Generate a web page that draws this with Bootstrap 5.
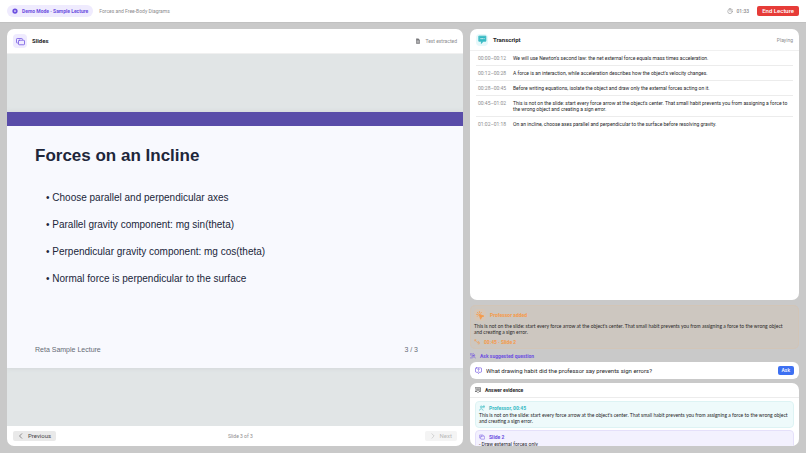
<!DOCTYPE html>
<html lang="en">
<head>
<meta charset="utf-8">
<meta name="viewport" content="width=device-width, initial-scale=1">
<title>Forces and Free-Body Diagrams</title>
<link href="https://cdn.jsdelivr.net/npm/bootstrap@5.3.0/dist/css/bootstrap.min.css" rel="stylesheet">
<style>
  body { font: 5px/6px Roboto, "Liberation Sans", sans-serif; background: #c9c9c9; color: #262628; }
  svg { flex: none; fill: none; stroke: currentColor; stroke-width: 1.5; stroke-linecap: round; stroke-linejoin: round; }
  .i6 { width: 6px; height: 6px; }
  .i7 { width: 7px; height: 7px; }
  .gap-s { gap: 4px; }
  .gap-h { gap: 5px; }
  .gap-m { gap: 6px; }
  .purple { color: #6c4fe0; }
  .muted { color: #8c8c8e; }
  .topbar { height: 22px; padding: 0 7px; box-shadow: 0 0 1px #999; }
  .mode-pill { background: #efebfe; padding: 3px 5px; border-radius: 6px; }
  .btn { font-size: 5px; line-height: 6px; border: 0; border-radius: 2px; }
  .btn-end { font-size: 6px; line-height: 8px; padding: 1px 5px; background: #e63c38; color: #fff; }
  .btn-end:hover { background: #c92f2c; color: #fff; }
  .workspace { display: grid; grid-template-columns: 456fr 329fr; gap: 7px; padding: 7px; min-height: 0; }
  .panel { background: #fff; border-radius: 7px; overflow: hidden; min-height: 0; }
  .panel-head { padding: 0 6px; border-bottom: 1px solid #f0f0f0; }
  .head-l { height: 25px; }
  .head-r { height: 22px; }
  .panel-head h2 { font-size: 6px; line-height: 8px; font-weight: 700; }
  .tile { width: 14px; height: 14px; border-radius: 4px; background: #efebfe; }
  .tile svg { width: 9px; height: 9px; }
  .tile-teal { width: 12px; height: 12px; background: #e6f8fa; color: #35b9c3; }
  .tile-orange { width: 12px; height: 12px; background: #d6c6b6; }
  .stage { background: #e1e5e6; min-height: 0; }
  .slide { background: #f8f9fe; border-top: 14px solid #594ca9; aspect-ratio: 456 / 256; padding: 0 45px 13px 28px; font-family: "Liberation Sans", Arial, sans-serif; color: #20263a; box-shadow: 0 0 5px #cdd2d4; }
  .slide h1 { font-size: 17px; line-height: 20px; font-weight: 700; margin: 20px 0 25px; }
  .slide ul { list-style: none; margin: 0; padding: 0 0 0 11px; font-size: 10px; line-height: 13px; display: grid; gap: 14px; }
  .slide li::before { content: "• "; }
  .slide-foot { font-size: 7px; line-height: 11px; color: #666b75; }
  .pager { height: 20px; padding: 0 6px; }
  .btn-page { font-size: 6px; line-height: 7px; padding: 1px 5px 2px; background: #e9e9e9; color: #454547; }
  .btn-page:disabled { background: #f4f4f4; color: #bababa; border: 0; opacity: 1; }
  .lines { padding: 0 6px; }
  .lines li { display: grid; grid-template-columns: 31px 1fr; gap: 4px; padding: 4px 5px 4px 2px; border-bottom: 1px solid #ececec; }
  .lines li:last-child { border: 0; }
  .side { min-height: 0; }
  .transcript { flex: 1 1 0; }
  .aside-note { background: #cdc7c0; border: 1px solid #d2c5b7; border-radius: 5px; padding: 3px; margin: 5px 0 4px; color: #2b2a29; }
  .orange { color: #f59a4a; }
  .note-text { font-family: Lato, "Liberation Sans", sans-serif; }
  .aside-note .note-text { margin: 2px 0 4px; }
  .ask { background: #fff; border-radius: 6px; height: 17px; padding: 0 5px; margin: 3px 0 4px; }
  .ask input { font: 6px/8px Roboto, "Liberation Sans", sans-serif; color: #262628; border: 0; padding: 0; outline: 0; min-width: 0; background: none; }
  .btn-ask { background: #3d70f2; color: #fff; padding: 1px 4px 2px; }
  .btn-ask:hover { background: #2f5fd8; color: #fff; }
  .answer { flex: 0 0 63px; }
  .answer-head { height: 15px; padding: 0 5px; border-bottom: 1px solid #ececec; }
  .answer-head h2 { font-size: 5px; line-height: 6px; font-weight: 700; }
  .evidence { margin: 3px 5px 0; padding: 3px; border: 1px solid #ddf3f4; border-radius: 4px; background: #eefafb; }
  .evidence p { margin: 1px 0 0; }
  .evidence-slide { background: #f3f1fe; border-color: #e5e0fa; margin-top: 2px; }
  .teal { color: #35b9c3; }
</style>
<script src="https://cdn.jsdelivr.net/npm/bootstrap@5.3.0/dist/js/bootstrap.bundle.min.js"></script>
</head>
<body class="vh-100 d-flex flex-column overflow-hidden">
<header class="topbar bg-white d-flex align-items-center justify-content-between">
  <div class="d-flex align-items-center gap-m">
    <span class="mode-pill purple fw-bold d-flex align-items-center gap-s">
      <svg class="i6" viewBox="0 0 16 16"><circle cx="8" cy="8" r="7" fill="currentColor" stroke="none"/><path d="M6.500 5v6l5-3z" fill="#fff" stroke="none"/></svg>
      Demo Mode · Sample Lecture
    </span>
    <span class="muted">Forces and Free-Body Diagrams</span>
  </div>
  <div class="d-flex align-items-center gap-s">
    <svg class="i6 muted" viewBox="0 0 16 16"><circle cx="8" cy="9" r="6"/><path d="M8 9V5M6 1h4M13 3l1 1"/></svg>
    <span class="muted fw-medium me-1">01:33</span>
    <button type="button" class="btn btn-end fw-medium">End Lecture</button>
  </div>
</header>

<main class="workspace flex-grow-1">
  <section class="panel d-flex flex-column" aria-labelledby="slides-title">
    <div class="panel-head head-l d-flex align-items-center justify-content-between">
      <div class="d-flex align-items-center gap-h">
        <span class="tile purple d-flex align-items-center justify-content-center"><svg viewBox="0 0 18 16"><path d="M3 11H2.500A1.500 1.500 0 0 1 1 9.500v-6A1.500 1.500 0 0 1 2.500 2h9A1.500 1.500 0 0 1 13 3.500"/><rect x="5" y="5.500" width="12" height="9" rx="1.500"/></svg></span>
        <h2 class="m-0" id="slides-title">Slides</h2>
      </div>
      <div class="d-flex align-items-center gap-1 muted">
        <svg class="i6" viewBox="0 0 16 16"><path d="M3 1h6l4 4v10H3z" fill="#77777a" stroke="none"/><path d="M5.500 8h5M5.500 11h5" stroke="#fff"/></svg>
        Text extracted
      </div>
    </div>
    <div class="stage flex-grow-1 d-flex flex-column justify-content-center">
      <article class="slide d-flex flex-column">
        <h1>Forces on an Incline</h1>
        <ul>
          <li>Choose parallel and perpendicular axes</li>
          <li>Parallel gravity component: mg sin(theta)</li>
          <li>Perpendicular gravity component: mg cos(theta)</li>
          <li>Normal force is perpendicular to the surface</li>
        </ul>
        <div class="slide-foot mt-auto d-flex justify-content-between"><span>Reta Sample Lecture</span><span>3 / 3</span></div>
      </article>
    </div>
    <div class="pager d-flex align-items-center justify-content-between">
      <button type="button" class="btn btn-page d-flex align-items-center gap-1"><svg class="i6" viewBox="0 0 16 16"><path d="M10 2L4 8l6 6"/></svg>Previous</button>
      <span class="muted">Slide 3 of 3</span>
      <button type="button" class="btn btn-page d-flex align-items-center gap-1" disabled><svg class="i6" viewBox="0 0 16 16"><path d="M5 2l6 6-6 6"/></svg>Next</button>
    </div>
  </section>

  <div class="side d-flex flex-column">
    <section class="panel transcript" aria-labelledby="transcript-title">
      <div class="panel-head head-r d-flex align-items-center justify-content-between">
        <div class="d-flex align-items-center gap-h">
          <span class="tile tile-teal d-flex align-items-center justify-content-center"><svg viewBox="0 0 16 16"><path d="M2 2h12v9H9l-3 4v-4H2z" fill="currentColor"/><path d="M5 6.500h1M8 6.500h.1M10.500 6.500h.5" stroke="#fff"/></svg></span>
          <h2 class="m-0" id="transcript-title">Transcript</h2>
        </div>
        <span class="muted">Playing</span>
      </div>
      <ol class="lines list-unstyled m-0">
        <li><span class="muted">00:00–00:12</span><span>We will use Newton's second law: the net external force equals mass times acceleration.</span></li>
        <li><span class="muted">00:12–00:28</span><span>A force is an interaction, while acceleration describes how the object's velocity changes.</span></li>
        <li><span class="muted">00:28–00:45</span><span>Before writing equations, isolate the object and draw only the external forces acting on it.</span></li>
        <li><span class="muted">00:45–01:02</span><span>This is not on the slide: start every force arrow at the object's center. That small habit prevents you from assigning a force to the wrong object and creating a sign error.</span></li>
        <li><span class="muted">01:02–01:18</span><span>On an incline, choose axes parallel and perpendicular to the surface before resolving gravity.</span></li>
      </ol>
    </section>

    <section class="aside-note">
      <div class="orange fw-bold d-flex align-items-center gap-1">
        <span class="tile tile-orange d-flex align-items-center justify-content-center"><svg class="i7" viewBox="0 0 16 16"><path d="M6 6l8 3-4 1.500L8.500 14z" fill="currentColor"/><path d="M6 1v2M1 6h2M2.500 2.500L4 4M9.500 2.500L8.500 4M2.500 9.500L4 8"/></svg></span>
        Professor added
      </div>
      <p class="note-text">This is not on the slide: start every force arrow at the object's center. That small habit prevents you from assigning a force to the wrong object<br>and creating a sign error.</p>
      <div class="orange fw-bold d-flex align-items-center gap-1"><svg class="i6" viewBox="0 0 16 16"><path d="M2 5V2h3M3 3l5 6h4M11 6l3 3v4h-3"/></svg>00:45 · Slide 2</div>
    </section>

    <div class="purple fw-bold d-flex align-items-center gap-1">
      <svg class="i6" viewBox="0 0 16 16"><path d="M6 2.500a4.500 4.500 0 1 1-2 5.500M11.500 10.500L15 14M1 2h3M1 5h2M1 13h5"/><circle cx="8" cy="6.500" r="1.500"/></svg>
      <label for="question">Ask suggested question</label>
    </div>
    <form class="ask d-flex align-items-center gap-s">
      <svg class="i7 purple" viewBox="0 0 16 16"><path d="M3 2h10q2 0 2 2v6q0 2-2 2h-3l-2 3-2-3H3q-2 0-2-2V4q0-2 2-2zM6.500 5.500q0-1.500 1.500-1.500t1.500 1.500Q9.500 6.500 8 7.500M8 9.500v.1"/></svg>
      <input id="question" class="flex-grow-1" type="text" value="What drawing habit did the professor say prevents sign errors?">
      <button type="button" class="btn btn-ask fw-medium">Ask</button>
    </form>

    <section class="panel answer">
      <div class="answer-head d-flex align-items-center gap-1">
        <svg class="i6" viewBox="0 0 16 16"><path d="M1 2h14v10h-4l-3 3-3-3H1zM4 5.500h3M9 5.500h3M4 8.500h3M9 8.500h3"/></svg>
        <h2 class="m-0">Answer evidence</h2>
      </div>
      <article class="evidence">
        <div class="teal fw-bold d-flex align-items-center gap-1"><svg class="i6" viewBox="0 0 16 16"><circle cx="6" cy="5" r="2.500"/><path d="M1 14q1-4 5-4t5 4M11 4h4M11 7h3M13 1v3"/></svg>Professor, 00:45</div>
        <p class="note-text">This is not on the slide: start every force arrow at the object's center. That small habit prevents you from assigning a force to the wrong object<br>and creating a sign error.</p>
      </article>
      <article class="evidence evidence-slide">
        <div class="purple fw-bold d-flex align-items-center gap-1"><svg class="i6" viewBox="0 0 18 16"><path d="M3 11H2.500A1.500 1.500 0 0 1 1 9.500v-6A1.500 1.500 0 0 1 2.500 2h9A1.500 1.500 0 0 1 13 3.500"/><rect x="5" y="5.500" width="12" height="9" rx="1.500"/></svg>Slide 2</div>
        <p>- Draw external forces only</p>
      </article>
    </section>
  </div>
</main>
</body>
</html>
